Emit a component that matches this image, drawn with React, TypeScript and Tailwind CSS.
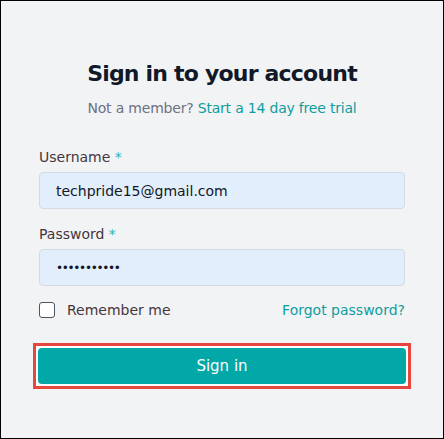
import { useState } from 'react'

const font = { fontFamily: '"DejaVu Sans", "Noto Sans", sans-serif' }
const label = 'block text-[14px] leading-5 text-[#45363c]'
const input =
  'block w-full h-[37px] rounded-[4px] border border-[#d3dae3] bg-[#e3eefc] px-4 text-[#111827] outline-none'

export default function App() {
  const [user, setUser] = useState('techpride15@gmail.com')
  const [pass, setPass] = useState('techpride15')
  const [remember, setRemember] = useState(false)

  return (
    <div className="w-[444px] h-[439px] border border-black bg-[#f2f3f5]" style={font}>
      <div className="px-[38px] pt-[57px]">
        <h1 className="text-center text-[22px] leading-8 font-bold text-[#111827] tracking-[-0.8px]">
          Sign in to your account
        </h1>
        <p className="mt-2 text-center text-[14px] leading-5 text-[#6b7280] tracking-[-0.2px]">
          Not a member? <a className="text-[#0e9e9e] font-medium">Start a 14 day free trial</a>
        </p>

        <form className="mt-[29px]" onSubmit={(e) => e.preventDefault()}>
          <label className={label}>
            Username <span className="text-[#2bb3b3]">*</span>
          </label>
          <input value={user} onChange={(e) => setUser(e.target.value)} className={`${input} mt-[5px] text-[14px]`} />

          <label className={`${label} mt-[15px]`}>
            Password <span className="text-[#2bb3b3]">*</span>
          </label>
          <input
            type="password"
            value={pass}
            onChange={(e) => setPass(e.target.value)}
            className={`${input} mt-[5px] text-[12px] tracking-[-1.3px]`}
          />

          <div className="mt-[15px] flex items-center justify-between h-[18px]">
            <label className="flex items-center gap-3 text-[14px] text-[#45363c]">
              <input
                type="checkbox"
                checked={remember}
                onChange={() => setRemember(!remember)}
                className="appearance-none w-4 h-4 rounded-[3px] border-[1.5px] border-[#4b5563] bg-white"
              />
              Remember me
            </label>
            <a className="text-[14px] text-[#0e9e9e] font-medium">Forgot password?</a>
          </div>

          <div className="mt-[24px] -mx-[6px] border-[3px] border-[#e5473f] bg-white p-[2px]">
            <button className="w-full h-[36px] rounded-[4px] bg-[#02a8a8] text-white text-[15px] font-medium">
              Sign in
            </button>
          </div>
        </form>
      </div>
    </div>
  )
}
